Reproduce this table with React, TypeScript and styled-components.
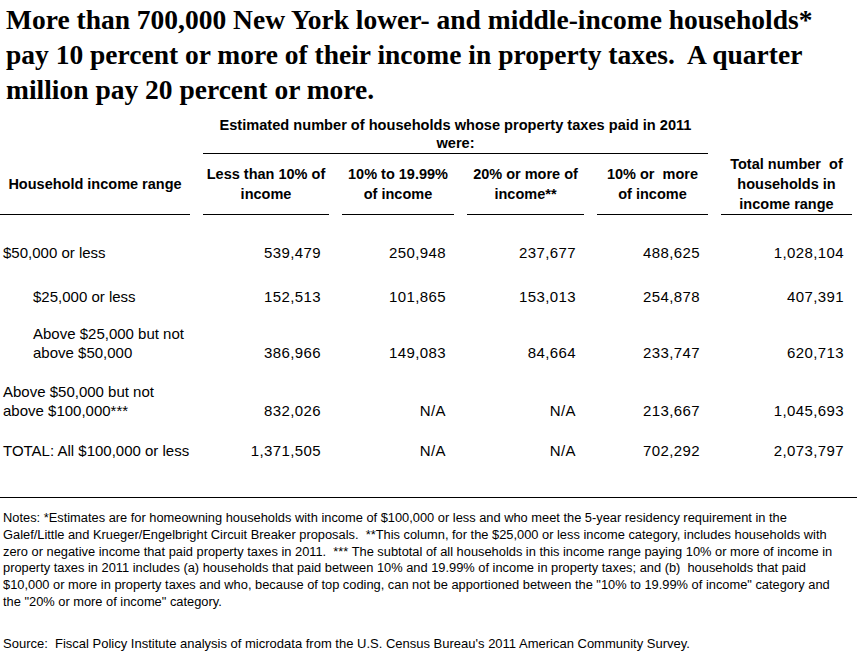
import React from "react";
import styled, { createGlobalStyle } from "styled-components";

const Global = createGlobalStyle`
  html, body { margin: 0; padding: 0; background: #fff; }
  body { font-family: "Liberation Sans", Arial, sans-serif; color: #000; }
`;

const Page = styled.div`
  width: 857px;
  height: 666px;
  overflow: hidden;
  background: #fff;
`;

const Title = styled.h1`
  margin: 2px 0 0 6px;
  font-family: "Liberation Serif", "Times New Roman", serif;
  font-weight: bold;
  font-size: 27.5px;
  line-height: 35px;
  color: #000;
  white-space: pre;
`;

const COLS = "190px 126px 112px 117px 111px 131px";

const GroupRow = styled.div`
  display: grid;
  grid-template-columns: ${COLS};
  column-gap: 13px;
  margin-top: 9px;
`;

const GroupTitle = styled.div`
  grid-column: 2 / 6;
  text-align: center;
  font-weight: bold;
  font-size: 14.6px;
  line-height: 18px;
  padding-bottom: 1px;
  border-bottom: 1px solid #000;
  white-space: pre;
`;

const HeadRow = styled.div`
  display: grid;
  grid-template-columns: ${COLS};
  column-gap: 13px;
  height: 60px;
`;

const HeadCell = styled.div`
  display: flex;
  align-items: center;
  justify-content: center;
  text-align: center;
  font-weight: bold;
  font-size: 14.5px;
  line-height: 20px;
  border-bottom: 1px solid #000;
  white-space: pre;
`;

const DataRow = styled.div<{ $h: number }>`
  display: grid;
  grid-template-columns: ${COLS};
  column-gap: 13px;
  height: ${(p) => p.$h}px;
  align-items: end;
  font-size: 15px;
  line-height: 19px;
`;

const Label = styled.div<{ $indent: boolean }>`
  padding-left: ${(p) => (p.$indent ? 33 : 3)}px;
  white-space: pre;
`;

const Num = styled.div`
  text-align: right;
  padding-right: 8px;
  letter-spacing: 0.4px;
`;

const Footer = styled.div`
  margin-top: 37px;
  border-top: 1px solid #000;
  padding-top: 12px;
  padding-left: 3px;
  font-size: 12.85px;
  line-height: 16.8px;
`;

const NoteLine = styled.div`
  white-space: pre;
`;

const Source = styled.div`
  margin-top: 25px;
  white-space: pre;
  font-size: 13px;
`;

const headers = [
  "Household income range",
  "Less than 10% of\nincome",
  "10% to 19.99%\nof income",
  "20% or more of\nincome**",
  "10% or  more\nof income",
  "Total number  of\nhouseholds in\nincome range",
];

const rows: { label: string; indent: boolean; h: number; vals: string[] }[] = [
  { label: "$50,000 or less", indent: false, h: 48, vals: ["539,479", "250,948", "237,677", "488,625", "1,028,104"] },
  { label: "$25,000 or less", indent: true, h: 44, vals: ["152,513", "101,865", "153,013", "254,878", "407,391"] },
  { label: "Above $25,000 but not\nabove $50,000", indent: true, h: 56, vals: ["386,966", "149,083", "84,664", "233,747", "620,713"] },
  { label: "Above $50,000 but not\nabove $100,000***", indent: false, h: 58, vals: ["832,026", "N/A", "N/A", "213,667", "1,045,693"] },
  { label: "TOTAL: All $100,000 or less", indent: false, h: 40, vals: ["1,371,505", "N/A", "N/A", "702,292", "2,073,797"] },
];

const notes = [
  "Notes: *Estimates are for homeowning households with income of $100,000 or less and who meet the 5-year residency requirement in the",
  "Galef/Little and Krueger/Engelbright Circuit Breaker proposals.  **This column, for the $25,000 or less income category, includes households with",
  "zero or negative income that paid property taxes in 2011.  *** The subtotal of all households in this income range paying 10% or more of income in",
  "property taxes in 2011 includes (a) households that paid between 10% and 19.99% of income in property taxes; and (b)  households that paid",
  "$10,000 or more in property taxes and who, because of top coding, can not be apportioned between the \"10% to 19.99% of income\" category and",
  "the \"20% or more of income\" category.",
];

export default function App() {
  return (
    <Page>
      <Global />
      <Title>
        {"More than 700,000 New York lower- and middle-income households*\npay 10 percent or more of their income in property taxes.  A quarter\nmillion pay 20 percent or more."}
      </Title>
      <GroupRow>
        <GroupTitle>{"Estimated number of households whose property taxes paid in 2011\nwere:"}</GroupTitle>
      </GroupRow>
      <HeadRow>
        {headers.map((h, i) => (
          <HeadCell key={i}>{h}</HeadCell>
        ))}
      </HeadRow>
      {rows.map((r, i) => (
        <DataRow key={i} $h={r.h}>
          <Label $indent={r.indent}>{r.label}</Label>
          {r.vals.map((v, j) => (
            <Num key={j}>{v}</Num>
          ))}
        </DataRow>
      ))}
      <Footer>
        {notes.map((n, i) => (
          <NoteLine key={i}>{n}</NoteLine>
        ))}
        <Source>{"Source:  Fiscal Policy Institute analysis of microdata from the U.S. Census Bureau's 2011 American Community Survey."}</Source>
      </Footer>
    </Page>
  );
}
